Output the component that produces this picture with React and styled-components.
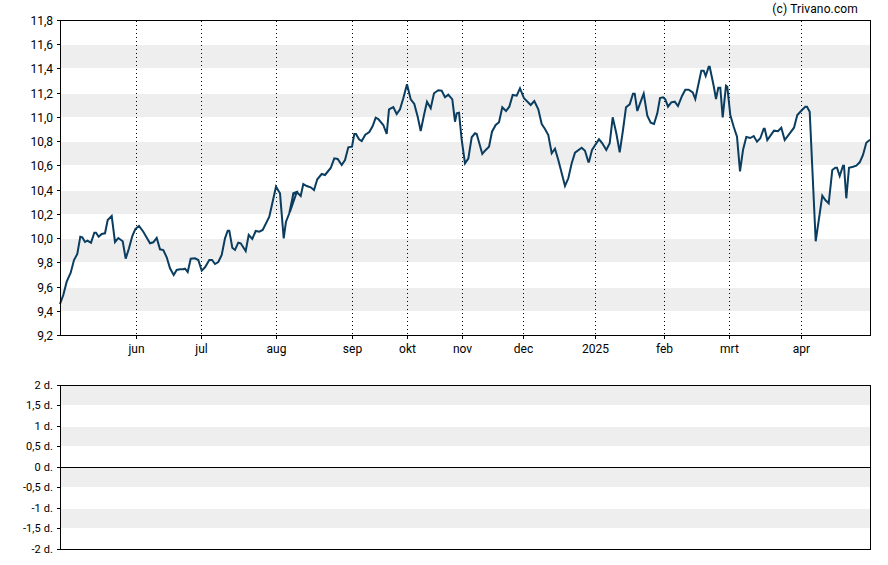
import React from "react";
import styled, { createGlobalStyle } from "styled-components";

const Global = createGlobalStyle`
  html, body { margin: 0; padding: 0; background: #fff; }
`;

const Page = styled.main`
  width: 888px;
  height: 565px;
  overflow: hidden;
`;
const Chart = styled.svg`
  display: block;
  width: 888px;
  height: 565px;
  font-family: Roboto, "Liberation Sans", sans-serif;
`;
const Band = styled.rect`fill: #eeeeee;`;
const Frame = styled.path`
  fill: none;
  stroke: #000;
  stroke-width: 1;
  shape-rendering: crispEdges;
`;
const Grid = styled.line`
  stroke: #000;
  stroke-width: 1;
  stroke-dasharray: 1 3;
  shape-rendering: crispEdges;
`;
const Trace = styled.path`
  fill: none;
  stroke: #0a3d5f;
  stroke-width: 2;
  stroke-linejoin: miter;
`;
const Label = styled.text`
  font-size: ${(p) => p.$size || 12}px;
  letter-spacing: ${(p) => p.$tracking || 0}px;
  fill: #000;
`;

const seg = (ox, oy, pts) => pts.map(([x, y]) => [ox + x / 3, oy + y / 3]);
const line = [
  ...seg(0, 180, [[180,372],[190,345],[200,305],[212,278],[222,240],[232,222],[241,170],[247,172],[255,186],[262,182],[273,188],[283,158],[288,158],[296,170],[305,162],[315,160],[323,120],[335,108],[345,186],[355,174],[368,184],[377,236],[387,205],[397,168],[406,147],[417,138],[430,155],[450,190],[460,187],[470,174],[480,208],[490,210],[500,232],[510,265],[521,285],[530,270],[540,268],[550,268],[555,266],[563,276],[572,236],[585,235],[595,240],[605,272],[615,262],[628,240],[636,240],[645,252],[655,246],[665,225],[675,175],[683,152],[688,152],[697,203],[705,210],[715,188],[722,190],[737,213],[746,165],[757,177],[767,153],[778,155],[788,150],[808,110],[828,20],[840,40],[851,175],[858,125],[868,100],[880,42],[890,37]]),
  ...seg(290, 60, [[0,455],[10,400],[20,396],[32,408],[40,372],[50,378],[62,382],[72,390],[82,358],[95,342],[105,345],[122,324],[133,295],[143,297],[155,315],[165,300],[175,262],[186,260],[193,222],[198,222],[207,238],[215,243],[226,224],[238,216],[248,198],[257,173],[265,177],[280,195],[290,222],[297,148],[310,141],[320,162],[330,148],[340,115],[351,73],[362,118],[373,132],[383,170],[392,213],[402,165],[411,125],[422,145],[432,100],[445,91],[455,92],[465,112],[475,104],[487,118],[495,185],[500,160],[507,158],[515,240],[525,310],[535,296],[545,232],[555,220],[560,222],[577,282],[585,272],[597,260],[606,215],[617,195],[627,187],[637,142],[648,153],[658,140],[668,105],[680,107],[690,85],[702,115],[722,135],[733,123],[745,148],[755,192],[765,207],[775,225],[785,280],[795,266],[805,300],[825,378],[835,355],[845,310],[855,278],[875,263],[885,272],[895,305]]),
  ...seg(588, 0, [[3,485],[12,450],[33,418],[43,430],[55,450],[65,430],[74,352],[85,400],[95,457],[105,390],[114,322],[125,313],[135,281],[140,281],[148,333],[158,305],[167,281],[178,347],[188,368],[198,372],[208,340],[216,294],[225,292],[232,298],[240,320],[250,307],[260,305],[270,318],[282,288],[292,269],[302,269],[314,277],[322,297],[340,212],[347,212],[353,228],[362,200],[365,200],[377,258],[384,297],[391,263],[397,263],[404,352],[414,257],[418,260],[427,345],[437,380],[447,410],[456,514],[465,450],[475,411],[487,414],[497,408],[507,425],[517,415],[527,386],[530,386],[538,420],[558,392],[570,394],[580,383],[590,420],[607,398],[618,383],[628,345],[642,330],[652,320],[657,320],[665,335]]),
  ...seg(588, 180, [[683,184],[703,47],[712,60],[722,70],[733,-30]]),
  ...seg(588, 0, [[742,503],[747,503],[755,528],[765,497],[768,497],[775,595],[783,503],[795,500],[805,497],[815,487],[825,465],[835,428],[846,419]]),
];
const tracePath = "M" + line.map(([x, y]) => `${x.toFixed(1)} ${y.toFixed(1)}`).join("L");

const mainBands = [[45,23],[94,23],[142,23],[191,23],[239,23],[288,23]];
const mainTicks = [
  ["11,8",20.5],["11,6",44.5],["11,4",68.5],["11,2",93.5],["11,0",117.5],["10,8",141.5],["10,6",165.5],
  ["10,4",190.5],["10,2",214.5],["10,0",238.5],["9,8",262.5],["9,6",287.5],["9,4",311.5],["9,2",335.5],
];
const months = [["jun",136.5],["jul",201.5],["aug",276.5],["sep",352.5],["okt",407.5],["nov",462.5],["dec",523.5],["2025",595.5],["feb",664.5],["mrt",729.5],["apr",801.5]];

const subBands = [[385,20],[427,19],[468,19],[509,19]];
const subTicks = [["2 d.",385.5],["1,5 d.",405.5],["1 d.",426.5],["0,5 d.",446.5],["0 d.",467.5],["-0,5 d.",487.5],["-1 d.",508.5],["-1,5 d.",528.5],["-2 d.",549.5]];

export default function App() {
  return (
    <Page>
      <Global />
      <Chart viewBox="0 0 888 565" role="img">
        <Label $tracking={0.14} x="858" y="13" textAnchor="end">(c) Trivano.com</Label>

        {mainBands.map(([y, h]) => <Band key={y} x="61" y={y} width="809" height={h} />)}
        {months.map(([m, x]) => <Grid key={m} x1={x} x2={x} y1="21" y2="335" />)}
        <Trace d={tracePath} />
        <Frame d="M60.5 20.5H870.5V335.5H60.5Z" />
        {mainTicks.map(([t, y]) => (
          <g key={t}>
            <Frame d={`M57 ${y}H60`} />
            <Label x="53" y={y + 4.5} textAnchor="end">{t}</Label>
          </g>
        ))}
        {months.map(([m, x]) => (
          <g key={m}>
            <Frame d={`M${x} 336V339`} />
            <Label x={x} y="353" textAnchor="middle">{m}</Label>
          </g>
        ))}

        {subBands.map(([y, h]) => <Band key={y} x="61" y={y} width="809" height={h} />)}
        <Frame d="M60.5 385.5H870.5V549.5H60.5Z" />
        <Frame d="M60.5 467.5H870.5" />
        {subTicks.map(([t, y]) => (
          <g key={t}>
            <Frame d={`M57 ${y}H60`} />
            <Label $size={11} $tracking={0.1} x="53" y={y + 3} textAnchor="end">{t}</Label>
          </g>
        ))}
      </Chart>
    </Page>
  );
}
